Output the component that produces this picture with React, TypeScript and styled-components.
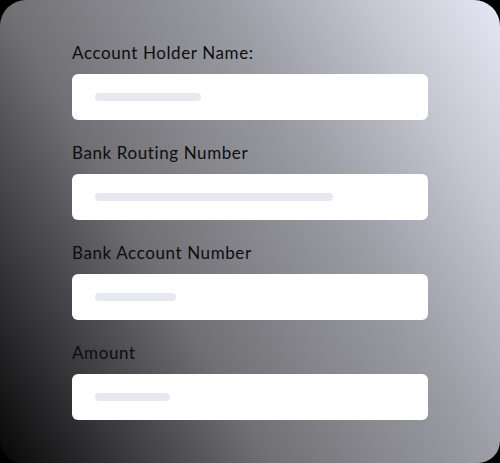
import styled, { createGlobalStyle } from 'styled-components';

const GlobalStyle = createGlobalStyle`
  html, body {
    margin: 0;
    padding: 0;
    background: #000;
  }
  body {
    font-family: Lato, "Noto Sans", sans-serif;
  }
`;

const Card = styled.div`
  width: 500px;
  height: 463px;
  box-sizing: border-box;
  padding: 43px 72px 0;
  border-radius: 26px 26px 22px 22px;
  background: linear-gradient(
    60deg,
    #060606 0%,
    #3a3a3d 17%,
    #6f6f74 35%,
    #87878d 50%,
    #9d9ea6 65%,
    #c4c6d0 83%,
    #e5e7f5 100%
  );
  display: flex;
  flex-direction: column;
  gap: 23px;
`;

const Field = styled.div`
  display: flex;
  flex-direction: column;
  gap: 11px;
`;

const Label = styled.label`
  font-size: 17px;
  line-height: 20px;
  color: #0d0d0f;
  letter-spacing: 0.6px;
`;

const Input = styled.div`
  width: 356px;
  height: 46px;
  box-sizing: border-box;
  padding-left: 23px;
  background: #fff;
  border-radius: 6px;
  display: flex;
  align-items: center;
`;

const Skeleton = styled.div<{ $width: number }>`
  width: ${(p) => p.$width}px;
  height: 8px;
  border-radius: 4px;
  background: #e8e8f0;
`;

const fields = [
  { label: 'Account Holder Name:', bar: 106 },
  { label: 'Bank Routing Number', bar: 238 },
  { label: 'Bank Account Number', bar: 81 },
  { label: 'Amount', bar: 75 },
];

export default function App() {
  return (
    <>
      <GlobalStyle />
      <Card>
        {fields.map((f) => (
          <Field key={f.label}>
            <Label>{f.label}</Label>
            <Input>
              <Skeleton $width={f.bar} />
            </Input>
          </Field>
        ))}
      </Card>
    </>
  );
}
